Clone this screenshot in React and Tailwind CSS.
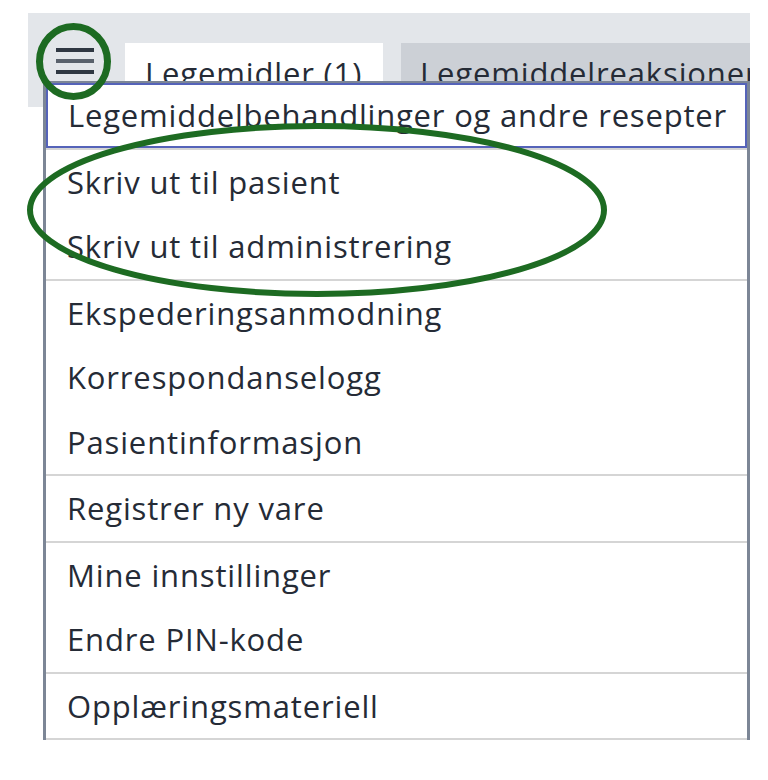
import React from 'react'

const groups = [
  ['Legemiddelbehandlinger og andre resepter'],
  ['Skriv ut til pasient', 'Skriv ut til administrering'],
  ['Ekspederingsanmodning', 'Korrespondanselogg', 'Pasientinformasjon'],
  ['Registrer ny vare'],
  ['Mine innstillinger', 'Endre PIN-kode'],
  ['Opplæringsmateriell'],
]

const Hamburger = () => (
  <div className="ml-[28px] flex w-[38px] shrink-0 flex-col gap-[7px] pt-[35px]">
    <div className="h-[4px] bg-[#2f3742]" />
    <div className="h-[4px] bg-[#59616c]" />
    <div className="h-[4px] bg-[#2f3742]" />
  </div>
)

const Tabs = () => (
  <div className="flex h-[94px] w-[722px] overflow-hidden bg-[#e3e6ea]">
    <Hamburger />
    <div className="ml-[31px] mt-[30px] flex shrink-0 items-start gap-[18px]">
      <div className="h-[64px] w-[258px] shrink-0 bg-white pl-[20px] pt-[11px] text-[31px] leading-[38px] tracking-[0.85px] text-[#252b36]">
        Legemidler (1)
      </div>
      <div className="h-[64px] w-[360px] shrink-0 whitespace-nowrap bg-[#ccd0d6] pl-[19px] pt-[11px] text-[31px] leading-[38px] tracking-[0.85px] text-[#252b36]">
        Legemiddelreaksjoner
      </div>
    </div>
  </div>
)

const Menu = () => (
  <div className="absolute left-[43px] top-[81px] w-[707px] border-x-[3px] border-t-2 border-[#7c8696] bg-white">
    {groups.map((items, g) => (
      <div key={g} className="border-b-2 border-[#d5d5d5]">
        {items.map((label) => (
          <div
            key={label}
            className={
              g === 0
                ? 'flex h-[64.5px] items-center whitespace-nowrap border-2 border-[#5563b9] pl-[20px] pr-[10px] text-[31px] tracking-[0.8px] text-[#252b36]'
                : 'flex h-[64.5px] items-center whitespace-nowrap px-[21px] text-[31px] tracking-[0.85px] text-[#252b36]'
            }
          >
            {label}
          </div>
        ))}
      </div>
    ))}
  </div>
)

const Annotations = () => (
  <svg className="pointer-events-none absolute left-0 top-0" width="768" height="780">
    <ellipse cx="73.5" cy="61.5" rx="34" ry="35" fill="none" stroke="#1d6b22" strokeWidth="7" />
    <ellipse cx="317" cy="210" rx="287" ry="84" fill="none" stroke="#1d6b22" strokeWidth="6" />
  </svg>
)

export default function App() {
  return (
    <div className="relative h-[780px] w-[768px] overflow-hidden bg-white" style={{ fontFamily: '"Open Sans", "Noto Sans", sans-serif' }}>
      <div className="pl-[28px] pt-[13px]">
        <Tabs />
      </div>
      <Menu />
      <Annotations />
    </div>
  )
}
